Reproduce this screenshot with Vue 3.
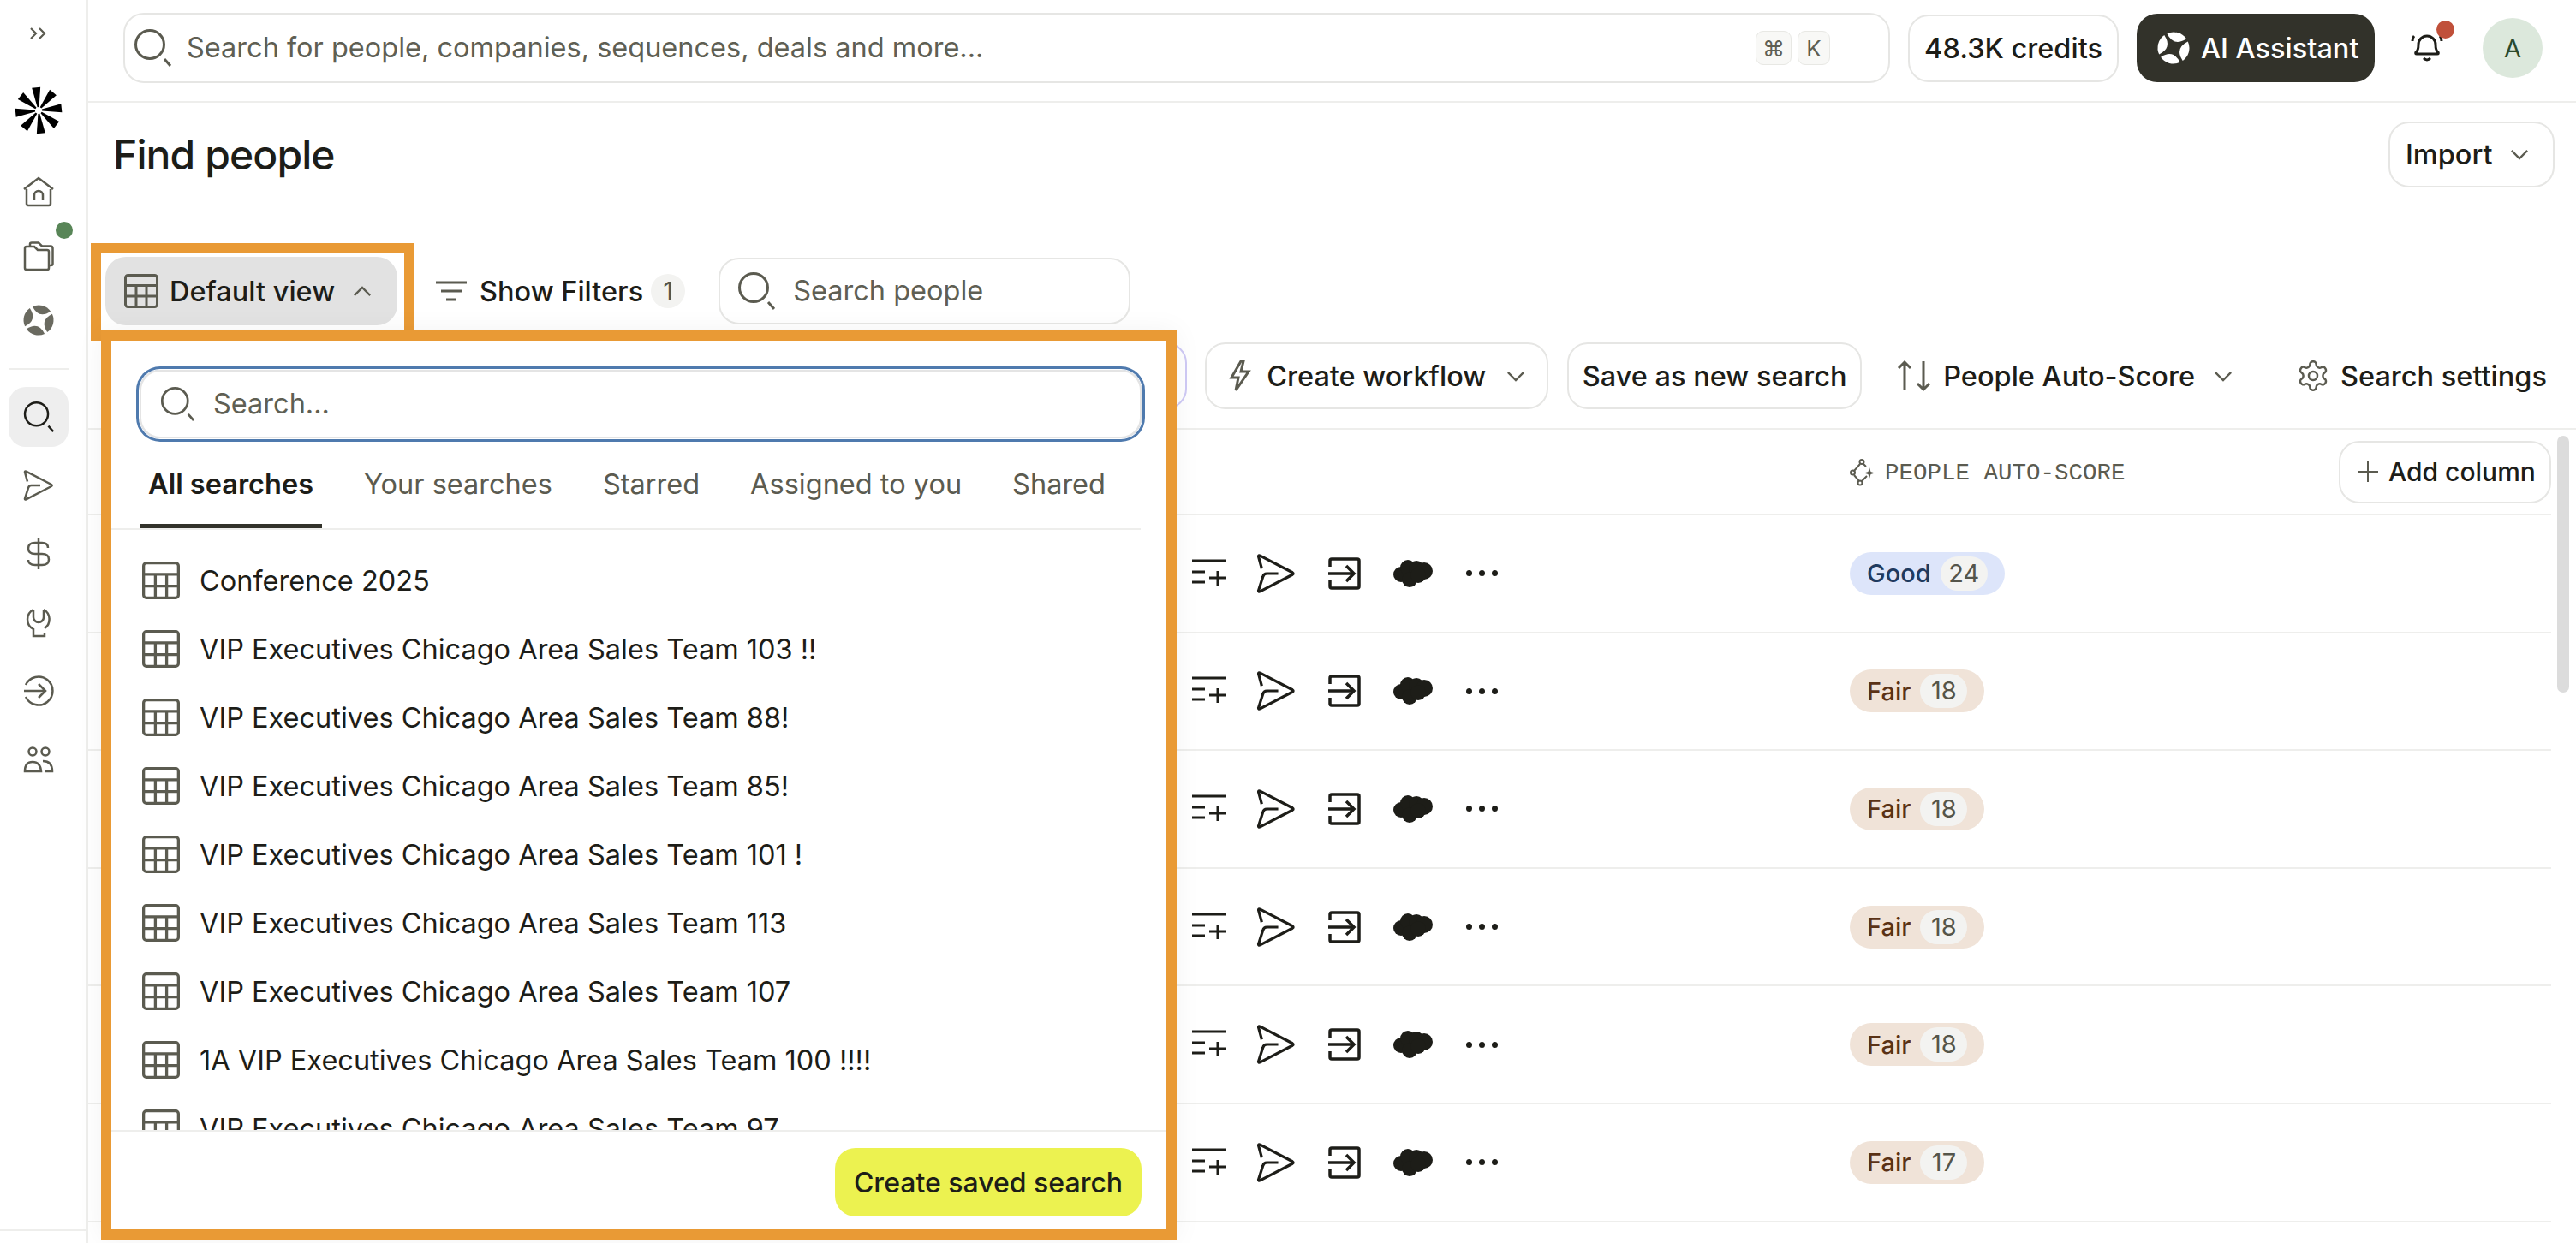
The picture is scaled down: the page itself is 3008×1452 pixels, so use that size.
<template>
  <div class="page">
    <svg class="defs" aria-hidden="true">
      <defs>
        <symbol id="i-search" viewBox="0 0 44 44">
          <circle cx="19" cy="18" r="16.5" />
          <path d="M36 35l7 8" />
        </symbol>
        <symbol id="i-table" viewBox="0 0 40 40">
          <rect x="1.5" y="1.5" width="37" height="37" rx="3" />
          <path d="M1.5 13.5h37M1.5 26h37M14 13.5v25M26 13.5v25" />
        </symbol>
        <symbol id="i-down" viewBox="0 0 24 14">
          <path d="M2 2l10 10L22 2" />
        </symbol>
        <symbol id="i-listplus" viewBox="0 0 40 34">
          <path d="M0 2h40M0 15h15M0 27h15M20 22h20M30 14v17" />
        </symbol>
        <symbol id="i-send" viewBox="0 0 36 36">
          <path d="M5 13.5L2 2.5q-.2-1.500 1.500-.8L33 17q1.500 1 0 2L3.500 34.300q-1.700.7-1.500-.8L6 21q.8-3 3.500-3H20" />
        </symbol>
        <symbol id="i-exit" viewBox="0 0 38 38">
          <path d="M2 11V4q0-2 2-2h30q2 0 2 2v30q0 2-2 2H4q-2 0-2-2v-7M0 19h30M21 10l9 9-9 9" />
        </symbol>
      </defs>
    </svg>

    <aside class="sidebar">
      <svg viewBox="0 0 22 14" class="expand"><path d="M2 1l6 6-6 6M12 1l6 6-6 6" /></svg>
      <svg class="logo" viewBox="-27 -27 54 54">
        <polygon
          v-for="a in spokes"
          :key="a"
          points="-1,-4 1,-4 5,-27 -5,-27"
          :transform="`rotate(${a})`"
        />
      </svg>
      <nav class="nav">
        <a class="nav-item">
          <svg viewBox="0 0 36 36" class="nav-icon"><path d="M1 15L18 2l17 13M4 15v17q0 2 2 2h24q2 0 2-2V15M13 28v-6a5 5 0 0 1 10 0v6" /></svg>
        </a>
        <a class="nav-item">
          <svg viewBox="0 0 36 36" class="nav-icon"><path d="M2 32V9q0-2 2-2h9l4 4h11q2 0 2 2v19q0 2-2 2H4q-2 0-2-2zM8 6V4q0-1.500 2-1.500h8l4 4h10q2.500 0 2.500 2.500v18q0 2-2 2H30" /></svg>
          <span class="green-dot"></span>
        </a>
        <a class="nav-item">
          <svg viewBox="-18 -18 36 36" class="nav-logo">
            <path v-for="a in petals" :key="a" d="M-11-13.500A17 17 0 0 1 11-13.500Q0-1-11-13.500Z" :transform="`rotate(${a})`" />
          </svg>
        </a>
      </nav>
      <div class="nav-sep"></div>
      <nav class="nav nav-lower">
        <a class="nav-item active">
          <svg class="nav-search"><use href="#i-search" /></svg>
        </a>
        <a class="nav-item">
          <svg class="nav-icon"><use href="#i-send" /></svg>
        </a>
        <a class="nav-item">
          <svg viewBox="0 0 36 36" class="nav-icon"><path d="M18 0v36M29 11q0-6-7-6h-8q-8 0-8 6.500T14 18h8q8 0 8 6.500T22 31h-8q-8 0-8-6" /></svg>
        </a>
        <a class="nav-item">
          <svg viewBox="0 0 36 36" class="nav-icon"><path d="M12 3A13 13 0 0 0 12 26v8h13v-3M24 3A13 13 0 0 1 25 25M12 3v9a6 6 0 0 0 12 0V3" /></svg>
        </a>
        <a class="nav-item">
          <svg viewBox="0 0 36 36" class="nav-icon"><path d="M3 11A16.500 16.500 0 1 1 3 25M1 18h25M18 10l8 8-8 8" /></svg>
        </a>
        <a class="nav-item">
          <svg viewBox="0 0 36 36" class="nav-icon"><circle cx="11" cy="9" r="4.500" /><circle cx="26" cy="9" r="4.500" /><path d="M2 32q0-11 9-11t10 11zM23 20q11 0 11 12H25" /></svg>
        </a>
      </nav>
      <div class="side-foot"></div>
    </aside>

    <main class="main">
      <header class="topbar">
        <div class="global-search">
          <svg class="ico-search"><use href="#i-search" /></svg>
          <span class="placeholder">Search for people, companies, sequences, deals and more...</span>
          <span class="kbd kbd-cmd">⌘</span>
          <span class="kbd">K</span>
        </div>
        <button class="btn credits">48.3K credits</button>
        <button class="ai-btn">
          <svg viewBox="-18 -18 36 36" class="ai-logo">
            <path v-for="a in petals" :key="a" d="M-11-13.500A17 17 0 0 1 11-13.500Q0-1-11-13.500Z" :transform="`rotate(${a})`" />
          </svg>
          AI Assistant
        </button>
        <div class="bell">
          <svg viewBox="0 0 40 44" class="bell-svg"><path d="M7 24q3-2 3-9a10 10 0 0 1 20 0q0 7 3 9q1 2-1 2H8q-2 0-1-2zM16 31q4 4 8 0M3 11q0-4 2-6M37 11q0-4-2-6" /></svg>
          <span class="red-dot"></span>
        </div>
        <div class="avatar">A</div>
      </header>

      <section class="head">
        <h1>Find people</h1>
        <button class="btn import">Import <svg class="chev"><use href="#i-down" /></svg></button>
      </section>

      <section class="bar-one">
        <button class="view-chip">
          <svg class="ico-table"><use href="#i-table" /></svg>
          Default view
          <svg class="chev chev-up"><use href="#i-down" /></svg>
        </button>
        <button class="plain filters">
          <svg viewBox="0 0 36 24" class="filter-ico"><path d="M0 2h36M6 12h24M12 22h12" /></svg>
          Show Filters
          <span class="count">1</span>
        </button>
        <div class="people-search">
          <svg class="ico-search"><use href="#i-search" /></svg>
          <span class="placeholder">Search people</span>
        </div>
      </section>

      <section class="bar-two">
        <button class="btn ghost-purple"></button>
        <button class="btn workflow">
          <svg viewBox="0 0 26 38" class="bolt"><path d="M14 2L3 21h8l-3 15 15-22h-9l3-12z" /></svg>
          Create workflow
          <svg class="chev"><use href="#i-down" /></svg>
        </button>
        <button class="btn save">Save as new search</button>
        <button class="plain sort">
          <svg viewBox="0 0 40 36" class="sort-ico"><path d="M9 35V2M2 9l7-7 7 7M31 1v33M24 27l7 7 7-7" /></svg>
          People Auto-Score
          <svg class="chev"><use href="#i-down" /></svg>
        </button>
        <button class="plain settings">
          <svg viewBox="0 0 24 24" class="gear"><path d="M12.220 2h-.44a2 2 0 0 0-2 2v.18a2 2 0 0 1-1 1.730l-.43.25a2 2 0 0 1-2 0l-.15-.08a2 2 0 0 0-2.730.73l-.22.38a2 2 0 0 0 .73 2.730l.15.1a2 2 0 0 1 1 1.720v.51a2 2 0 0 1-1 1.740l-.15.09a2 2 0 0 0-.73 2.730l.22.38a2 2 0 0 0 2.730.73l.15-.08a2 2 0 0 1 2 0l.43.25a2 2 0 0 1 1 1.730V20a2 2 0 0 0 2 2h.44a2 2 0 0 0 2-2v-.18a2 2 0 0 1 1-1.730l.43-.25a2 2 0 0 1 2 0l.15.08a2 2 0 0 0 2.730-.73l.22-.39a2 2 0 0 0-.73-2.730l-.15-.08a2 2 0 0 1-1-1.740v-.5a2 2 0 0 1 1-1.740l.15-.09a2 2 0 0 0 .73-2.730l-.22-.38a2 2 0 0 0-2.730-.73l-.15.08a2 2 0 0 1-2 0l-.43-.25a2 2 0 0 1-1-1.730V4a2 2 0 0 0-2-2z" /><circle cx="12" cy="12" r="3" /></svg>
          Search settings
        </button>
      </section>

      <section class="table">
        <div class="table-head">
          <div class="col-label">
            <svg viewBox="0 0 30 32" class="spark"><circle cx="14" cy="3.500" r="2.500" /><circle cx="3.500" cy="16" r="2.500" /><circle cx="12" cy="28" r="2.500" /><path d="M12 6L5 14M5 19l6 7M14 26l6-6M16 6l3 3" /><path class="spark-fill" d="M23 10l1.500 5 5 1.500-5 1.500-1.500 5-1.500-5-5-1.500 5-1.500z" /></svg>
            PEOPLE AUTO-SCORE
          </div>
          <button class="btn add-col">
            <svg viewBox="0 0 24 24" class="plus"><path d="M12 0v24M0 12h24" /></svg>
            Add column
          </button>
        </div>
        <div v-for="(row, i) in rows" :key="i" class="row">
          <div class="actions">
            <svg class="a-list"><use href="#i-listplus" /></svg>
            <svg class="a-send"><use href="#i-send" /></svg>
            <svg class="a-exit"><use href="#i-exit" /></svg>
            <svg viewBox="0 0 46 32" class="a-cloud"><circle cx="9" cy="17" r="9" /><circle cx="17" cy="9" r="9" /><circle cx="27" cy="10" r="9" /><circle cx="36" cy="13" r="10" /><circle cx="19" cy="23" r="9" /><circle cx="29" cy="18" r="9" /></svg>
            <span class="dots"><i></i><i></i><i></i></span>
          </div>
          <span class="score" :class="row.label.toLowerCase()">
            {{ row.label }}<b>{{ row.score }}</b>
          </span>
        </div>
      </section>
    </main>

    <div class="scrollbar"></div>

    <!-- highlight around the view button -->
    <div class="mark"></div>

    <!-- saved searches dropdown -->
    <div class="dropdown">
      <div class="dd-search-wrap">
        <div class="dd-search">
          <svg class="ico-search"><use href="#i-search" /></svg>
          <span class="placeholder">Search...</span>
        </div>
      </div>
      <div class="tabs">
        <span v-for="(t, i) in tabs" :key="t" class="tab" :class="{ on: i === 0 }">{{ t }}</span>
      </div>
      <ul class="list">
        <li v-for="s in searches" :key="s">
          <svg class="ico-row"><use href="#i-table" /></svg>
          {{ s }}
        </li>
      </ul>
      <div class="dd-foot">
        <button class="create">Create saved search</button>
      </div>
    </div>
  </div>
</template>

<script setup>
const spokes = [-6, 39, 84, 129, 174, 219, 264, 309]
const petals = [15, 105, 195, 285]

const tabs = ['All searches', 'Your searches', 'Starred', 'Assigned to you', 'Shared']

const searches = [
  'Conference 2025',
  'VIP Executives Chicago Area Sales Team 103 !!',
  'VIP Executives Chicago Area Sales Team 88!',
  'VIP Executives Chicago Area Sales Team 85!',
  'VIP Executives Chicago Area Sales Team 101 !',
  'VIP Executives Chicago Area Sales Team 113',
  'VIP Executives Chicago Area Sales Team 107',
  '1A VIP Executives Chicago Area Sales Team 100 !!!!',
  'VIP Executives Chicago Area Sales Team 97',
]

const rows = [
  { label: 'Good', score: 24 },
  { label: 'Fair', score: 18 },
  { label: 'Fair', score: 18 },
  { label: 'Fair', score: 18 },
  { label: 'Fair', score: 18 },
  { label: 'Fair', score: 17 },
]
</script>

<style>
html, body { margin: 0; background: #fff; }
</style>

<style scoped>
.page {
  position: relative;
  display: flex;
  width: 3008px;
  height: 1452px;
  overflow: hidden;
  background: #fff;
  color: #1d1d18;
  font-family: Inter, "Liberation Sans", sans-serif;
  font-size: 32.5px;
}
.defs { position: absolute; width: 0; height: 0; }
svg { fill: none; stroke: #5b5b50; stroke-width: 3; flex: none; display: block; overflow: visible; }
button { font: inherit; color: inherit; background: none; border: none; padding: 0; }

/* sidebar */
.sidebar {
  width: 90px;
  padding-right: 11px;
  flex: none;
  border-right: 2px solid #eeeeec;
  display: flex;
  flex-direction: column;
  align-items: center;
}
.expand { width: 22px; height: 14px; margin-top: 32px; margin-bottom: 18px; stroke-width: 2.200; }
.logo { width: 54px; height: 54px; margin-top: 38px; fill: #000; stroke: none; }
.nav { display: flex; flex-direction: column; align-items: center; margin-top: 30px; }
.nav-item { position: relative; width: 70px; height: 75px; display: flex; align-items: center; justify-content: center; }
.nav-icon { width: 36px; height: 36px; stroke-width: 2.500; }
.nav-logo { width: 36px; height: 36px; fill: #6a6a60; stroke: none; }
.green-dot { position: absolute; left: 55px; top: -2px; width: 20px; height: 20px; border-radius: 50%; background: #588557; }
.nav-sep { width: 71px; height: 2px; margin-top: 19px; background: #eeeeec; }
.nav-lower { margin-top: 20px; }
.nav-lower .nav-item { height: 80px; }
.nav-lower .active { height: 70px; margin-bottom: 5px; border-radius: 20px; background: #eeeeee; }
.nav-search { width: 36px; height: 36px; stroke: #1d1d18; }
.side-foot { margin-top: auto; margin-bottom: 14px; width: 101px; margin-right: -11px; height: 2px; background: #eeeeec; }

/* top bar */
.main { flex: 1; min-width: 0; display: flex; flex-direction: column; }
.topbar {
  height: 118px;
  flex: none;
  box-sizing: content-box;
  border-bottom: 2px solid #eeeeec;
  display: flex;
  align-items: center;
  padding: 0 39px 0 41px;
  gap: 21px;
}
.global-search {
  flex: 1;
  height: 82px;
  box-sizing: border-box;
  border: 2px solid #e6e6e4;
  border-radius: 24px;
  display: flex;
  align-items: center;
  padding: 0 68px 0 10px;
  margin-top: -6px;
}
.ico-search { width: 44px; height: 44px; }
.placeholder { color: #5f5f54; padding-bottom: 2px; }
.global-search .placeholder { margin-left: 18px; flex: 1; }
.kbd {
  width: 38px;
  height: 40px;
  box-sizing: border-box;
  display: flex;
  align-items: center;
  justify-content: center;
  border: 1px solid #e8e8e4;
  border-radius: 9px;
  background: #f8f8f6;
  color: #5f5f54;
  font-size: 26px;
}
.kbd-cmd { width: 42px; margin-right: 7px; }
.btn { border: 2px solid #e6e6e4; border-radius: 24px; background: #fff; box-sizing: border-box; display: flex; align-items: center; }
.credits { height: 79px; width: 246px; justify-content: center; font-weight: 500; margin-top: -6px; }
.ai-btn {
  width: 278px;
  height: 80px;
  margin-top: -6px;
  border-radius: 24px;
  background: #32322a;
  color: #fff;
  font-weight: 500;
  display: flex;
  align-items: center;
  gap: 13px;
  padding-left: 24px;
  box-sizing: border-box;
}
.ai-logo { width: 38px; height: 38px; fill: #fff; stroke: none; }
.bell { position: relative; width: 40px; height: 44px; margin-left: 20px; margin-right: 24px; }
.bell-svg { width: 40px; height: 44px; stroke: #1d1d18; }
.red-dot { position: absolute; left: 31px; top: -13px; width: 21px; height: 21px; border-radius: 50%; background: #c0503a; }
.avatar {
  width: 70px;
  height: 70px;
  margin-top: -6px;
  border-radius: 50%;
  background: #dce8dc;
  color: #2c4a2c;
  display: flex;
  align-items: center;
  justify-content: center;
  font-size: 29px;
}

/* heading */
.head { height: 180px; flex: none; display: flex; justify-content: space-between; align-items: flex-start; padding: 22px 25px 0 29px; box-sizing: border-box; }
h1 { margin: 10px 0 0; font-size: 48px; font-weight: 500; line-height: 58px; letter-spacing: -0.9px; }
.import { width: 194px; height: 77px; padding-left: 18px; gap: 20px; font-weight: 500; }
.chev { width: 22px; height: 13px; stroke-width: 2.500; }
.chev-up { transform: rotate(180deg); }

/* first bar */
.bar-one { height: 80px; flex: none; display: flex; align-items: center; padding-left: 20px; }
.view-chip {
  width: 341px;
  height: 80px;
  border-radius: 24px;
  background: #e2e2e2;
  display: flex;
  align-items: center;
  padding-left: 22px;
  box-sizing: border-box;
  font-weight: 500;
}
.ico-table { width: 40px; height: 40px; margin-right: 13px; }
.view-chip .chev { margin-left: 21px; }
.plain { display: flex; align-items: center; font-weight: 500; white-space: nowrap; }
.filters { margin-left: 45px; }
.filter-ico { width: 36px; height: 24px; margin-right: 15px; }
.count {
  width: 40px;
  height: 40px;
  margin-left: 9px;
  border-radius: 50%;
  background: #f3f3f1;
  color: #55554a;
  display: flex;
  align-items: center;
  justify-content: center;
  font-size: 28px;
  font-weight: 400;
}
.people-search {
  width: 481px;
  height: 78px;
  margin-left: 39px;
  box-sizing: border-box;
  border: 2px solid #e6e6e4;
  border-radius: 24px;
  display: flex;
  align-items: center;
  padding-left: 20px;
}
.people-search .placeholder { margin-left: 21px; }

/* second bar */
.bar-two {
  height: 122px;
  flex: none;
  box-sizing: border-box;
  border-bottom: 2px solid #eeeeec;
  display: flex;
  align-items: center;
  justify-content: flex-end;
  padding: 0 34px 2px 0;
}
.bar-two .btn { height: 78px; font-weight: 500; }
.ghost-purple { width: 200px; border-color: #cfcaf5 !important; margin-right: 21px; }
.workflow { width: 401px; padding-left: 26px; }
.bolt { width: 26px; height: 38px; margin-right: 18px; }
.workflow .chev { margin-left: 24px; }
.save { width: 344px; justify-content: center; margin-left: 22px; }
.sort { margin-left: 41px; }
.sort-ico { width: 40px; height: 36px; margin-right: 14px; }
.sort .chev { margin-left: 22px; }
.settings { margin-left: 74px; }
.gear { width: 40px; height: 40px; margin-right: 12px; stroke-width: 1.500; }

/* table */
.table { flex: 1; padding-right: 29px; }
.table-head {
  height: 98px;
  border-bottom: 2px solid #eeeeec;
  display: flex;
  align-items: center;
  justify-content: space-between;
  padding-left: 2057px;
}
.col-label { display: flex; align-items: center; gap: 11px; margin-top: 2px; font-family: "Liberation Mono", monospace; font-size: 27.500px; color: #5b5b50; }
.spark { width: 30px; height: 32px; stroke-width: 2; }
.spark-fill { fill: #5b5b50; stroke: none; }
.add-col { width: 248px; height: 73px; padding-left: 20px; font-size: 30px; font-weight: 500; white-space: nowrap; }
.plus { width: 24px; height: 24px; margin-right: 12px; stroke-width: 2; }
.row {
  height: 135.600px;
  border-bottom: 2px solid #eeeeec;
  display: grid;
  grid-template-columns: 768px auto;
  justify-content: start;
  align-items: center;
  padding-left: 1289px;
}
.actions { display: flex; align-items: center; }
.actions svg { stroke: #1d1d18; }
.a-list { width: 40px; height: 34px; }
.a-send { width: 46px; height: 46px; margin-left: 35px; stroke-width: 2.500; }
.a-exit { width: 38px; height: 38px; margin-left: 38px; stroke-width: 3.500; }
.a-cloud { width: 46px; height: 32px; margin-left: 38px; fill: #1d1d18; stroke: none !important; }
.dots { display: flex; gap: 8px; margin-left: 39px; }
.dots i { width: 7px; height: 7px; border-radius: 50%; background: #1d1d18; }
.score {
  height: 50px;
  border-radius: 25px;
  display: inline-flex;
  align-items: center;
  padding: 0 20px;
  font-size: 29px;
  font-weight: 500;
  justify-self: start;
}
.score b {
  width: 55px;
  height: 40px;
  margin-left: 11px;
  border-radius: 20px;
  background: #f3f3f1;
  color: #55554a;
  font-weight: 400;
  line-height: 40px;
  text-align: center;
}
.good { background: #dde5fa; color: #1f3a5f; }
.fair { background: #f0e3d8; color: #5a3216; }

.scrollbar { position: absolute; left: 2986px; top: 509px; width: 14px; height: 300px; border-radius: 7px; background: #dcdcdc; }

/* orange highlights */
.mark {
  position: absolute;
  left: 106px;
  top: 284px;
  width: 378px;
  height: 114px;
  box-sizing: border-box;
  border: 12px solid #e99a35;
}
.dropdown {
  position: absolute;
  left: 118px;
  top: 386px;
  width: 1256px;
  height: 1062px;
  box-sizing: border-box;
  border: 12px solid #e99a35;
  background: #fff;
  box-shadow: 0 0 30px rgba(0, 0, 0, 0.05);
  display: flex;
  flex-direction: column;
}
.dd-search-wrap { padding: 34px 29px 0 33px; }
.dd-search {
  height: 80px;
  box-sizing: border-box;
  border: 2px solid #e4e4e4;
  border-radius: 24px;
  box-shadow: 0 0 0 1px #fff, 0 0 0 4px #4f7aae;
  display: flex;
  align-items: center;
  padding-left: 22px;
}
.dd-search .ico-search { width: 40px; height: 40px; }
.dd-search .placeholder { margin-left: 22px; }
.tabs {
  height: 107px;
  margin-right: 30px;
  padding-left: 33px;
  box-sizing: border-box;
  border-bottom: 2px solid #eeeeec;
  display: flex;
  gap: 39px;
}
.tab { padding: 34px 10px 0; color: #5b5b50; line-height: 40px; white-space: nowrap; box-sizing: border-box; height: 105px; }
.tab.on { color: #1d1d18; font-weight: 600; border-bottom: 5px solid #32322a; }
.list { flex: 1; min-height: 0; overflow: hidden; list-style: none; margin: 0; padding: 19px 0 0 36px; }
.list li { height: 80px; display: flex; align-items: center; gap: 23px; }
.ico-row { width: 44px; height: 44px; }
.dd-foot { height: 116px; flex: none; box-sizing: border-box; border-top: 2px solid #eeeeec; display: flex; align-items: flex-start; justify-content: flex-end; padding: 19px 29px 0 0; }
.create { width: 358px; height: 80px; border-radius: 24px; background: #ecf250; font-size: 32px; font-weight: 500; }
</style>
